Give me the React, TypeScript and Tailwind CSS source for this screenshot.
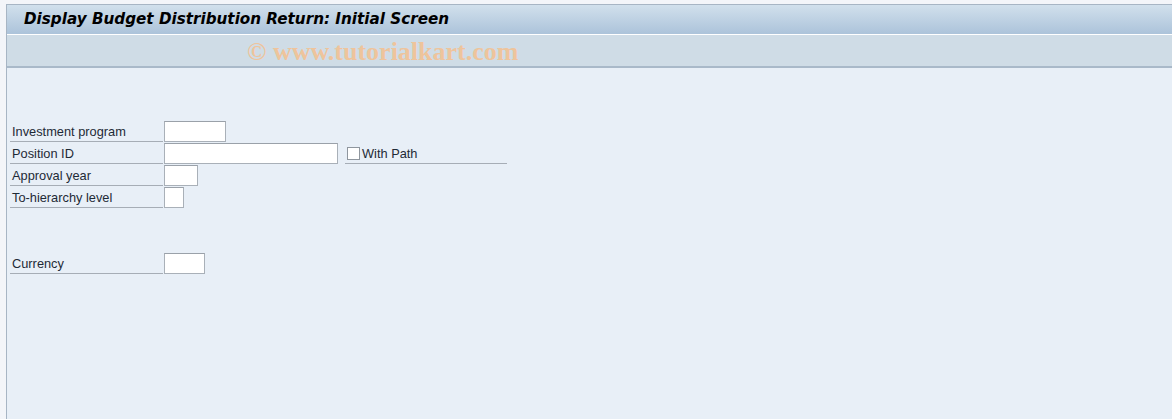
import React from 'react';

interface FieldRowProps {
    label: string;
    inputWidth: string;
    children?: React.ReactNode;
}

const FieldRow: React.FC<FieldRowProps> = ({ label, inputWidth, children }) => (
    <div className="flex items-end h-[22px]">
        <div className="w-[153px] h-[22px] flex items-end pl-[2px] pb-[2px] border-b border-[#a6adb6] text-[12.8px] leading-[14px] text-[#1e2a36]">
            {label}
        </div>
        <div className={`${inputWidth} h-[21px] ml-[1px] bg-white border border-[#a9b0b8] border-t-[#9aa1a9]`} />
        {children}
    </div>
);

export default function App() {
    return (
        <div
            className="w-[1172px] h-[419px] bg-[#f3f5f9] pl-[6px] pt-[4px] overflow-hidden"
            style={{ fontFamily: '"Liberation Sans", Arial, sans-serif' }}
        >
            <div className="h-full flex flex-col border-l border-t border-[#a7b5c4]">
                {/* Title bar */}
                <div className="h-[30px] flex items-center pl-[17px] bg-gradient-to-b from-[#d1e0ec] to-[#acc3da] border-b border-white">
                    <span
                        className="text-[15.2px] font-bold italic text-black"
                        style={{ fontFamily: '"DejaVu Sans", Verdana, sans-serif' }}
                    >
                        Display Budget Distribution Return: Initial Screen
                    </span>
                </div>

                {/* Toolbar */}
                <div className="h-[33px] bg-[#cfdce6] border-b-2 border-[#a9b9c9] flex items-start pl-[240px] pt-[2px]">
                    <span
                        className="text-[26px] leading-[30px] font-bold text-[#eec49c]"
                        style={{ fontFamily: '"Liberation Serif", "Times New Roman", serif' }}
                    >
                        © www.tutorialkart.com
                    </span>
                </div>

                {/* Body */}
                <div className="flex-1 bg-[#e8eff7] pl-[3px] pt-[52px]">
                    <FieldRow label="Investment program" inputWidth="w-[62px]" />
                    <FieldRow label="Position ID" inputWidth="w-[174px]">
                        <div className="ml-[7px] w-[162px] h-[22px] flex items-end gap-[2px] border-b border-[#a6adb6] pb-[2px]">
                            <div className="w-[13px] h-[13px] ml-[2px] mb-[1px] bg-white border border-[#8f969e]" />
                            <span className="text-[12.8px] leading-[14px] text-[#1e2a36]">With Path</span>
                        </div>
                    </FieldRow>
                    <FieldRow label="Approval year" inputWidth="w-[34px]" />
                    <FieldRow label="To-hierarchy level" inputWidth="w-[20px]" />
                    <div className="h-[44px]" />
                    <FieldRow label="Currency" inputWidth="w-[41px]" />
                </div>
            </div>
        </div>
    );
}
